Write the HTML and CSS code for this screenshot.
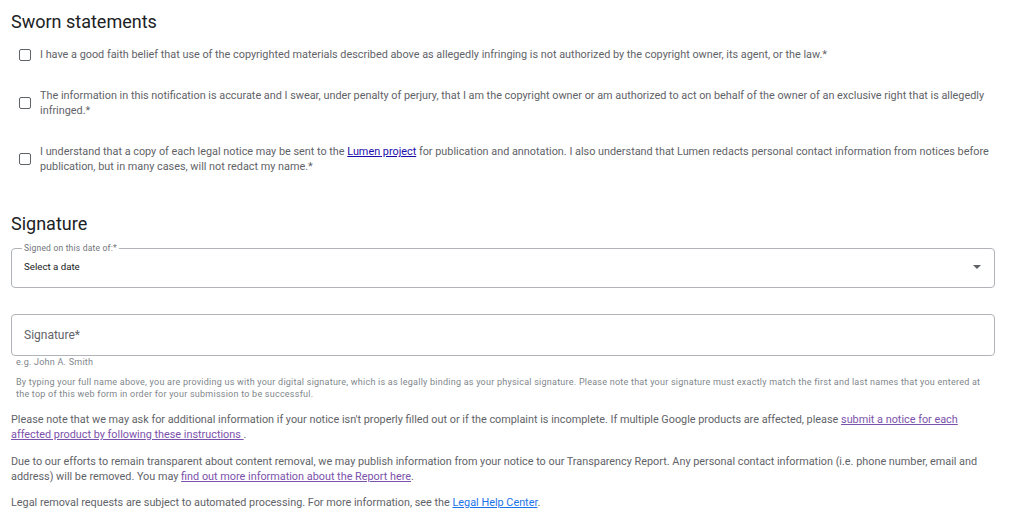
FILE: index.html
```html
<!DOCTYPE html>
<html lang="en">
<head>
<meta charset="utf-8">
<title>Sworn statements</title>
<link rel="stylesheet" href="styles.css">
</head>
<body>
<main class="page">
  <h2 class="heading">Sworn statements</h2>
  <div class="checks">
    <label class="check">
      <span class="box"></span>
      <span class="check-text">I have a good faith belief that use of the copyrighted materials described above as allegedly infringing is not authorized by the copyright owner, its agent, or the law.*</span>
    </label>
    <label class="check">
      <span class="box"></span>
      <span class="check-text">The information in this notification is accurate and I swear, under penalty of perjury, that I am the copyright owner or am authorized to act on behalf of the owner of an exclusive right that is allegedly infringed.*</span>
    </label>
    <label class="check">
      <span class="box"></span>
      <span class="check-text">I understand that a copy of each legal notice may be sent to the <a class="link-lumen" href="#">Lumen project</a> for publication and annotation. I also understand that Lumen redacts personal contact information from notices before publication, but in many cases, will not redact my name.*</span>
    </label>
  </div>

  <h2 class="heading heading-sig">Signature</h2>

  <fieldset class="date-field">
    <legend class="date-label">Signed on this date of:*</legend>
    <div class="date-row">
      <span class="date-value">Select a date</span>
      <span class="caret"></span>
    </div>
  </fieldset>

  <div class="sig-field">
    <span class="sig-placeholder">Signature*</span>
  </div>
  <div class="hint">e.g. John A. Smith</div>
  <p class="fine">By typing your full name above, you are providing us with your digital signature, which is as legally binding as your physical signature. Please note that your signature must exactly match the first and last names that you entered at the top of this web form in order for your submission to be successful.</p>

  <p class="para">Please note that we may ask for additional information if your notice isn't properly filled out or if the complaint is incomplete. If multiple Google products are affected, please <a class="link-visited" href="#">submit a notice for each affected product by following these instructions </a>.</p>
  <p class="para">Due to our efforts to remain transparent about content removal, we may publish information from your notice to our Transparency Report. Any personal contact information (i.e. phone number, email and address) will be removed. You may <a class="link-visited" href="#">find out more information about the Report here</a>.</p>
  <p class="para">Legal removal requests are subject to automated processing. For more information, see the <a class="link-blue" href="#">Legal Help Center</a>.</p>
</main>
</body>
</html>
```
FILE: styles.css
```css
html, body {
  margin: 0;
  padding: 0;
  background: #ffffff;
}
body {
  font-family: Roboto, "Liberation Sans", Arial, sans-serif;
  color: #5f6368;
}
.page {
  width: 984px;
  margin-left: 11px;
  padding-top: 10px;
}
.heading {
  margin: 0;
  font-size: 18px;
  font-weight: 400;
  line-height: 24px;
  color: #202124;
}
.checks {
  display: flex;
  flex-direction: column;
  gap: 26px;
  margin-top: 13px;
  padding-left: 8px;
}
.check {
  display: flex;
  align-items: center;
  gap: 9px;
}
.box {
  flex: none;
  width: 10px;
  height: 10px;
  border: 1.5px solid #5f6368;
  border-radius: 2px;
}
.check-text {
  font-size: 10.85px;
  line-height: 15px;
  color: #5f6368;
}
.link-lumen {
  color: #1a0dab;
  text-decoration: underline;
}
.heading-sig {
  margin-top: 38px;
}
.date-field {
  margin: 8px 0 0;
  padding: 0 12px 10px 12px;
  border: 1px solid #b0b4b8;
  border-radius: 4px;
  min-inline-size: 0;
}
.date-label {
  padding: 0 2px;
  margin-left: -2px;
  font-size: 8.5px;
  letter-spacing: 0.2px;
  line-height: 9px;
  color: #70757a;
}
.date-row {
  display: flex;
  align-items: center;
  justify-content: space-between;
  padding-top: 7px;
  padding-bottom: 4px;
}
.date-value {
  font-size: 9.7px;
  line-height: 13px;
  color: #202124;
}
.caret {
  width: 0;
  height: 0;
  border-left: 4px solid transparent;
  border-right: 4px solid transparent;
  border-top: 4px solid #5f6368;
  margin-right: 1px;
}
.sig-field {
  margin-top: 26px;
  height: 40px;
  border: 1px solid #b0b4b8;
  border-radius: 4px;
  display: flex;
  align-items: center;
  padding-left: 12px;
}
.sig-placeholder {
  font-size: 12px;
  color: #5f6368;
}
.hint {
  margin-top: 1px;
  padding-left: 5px;
  font-size: 9px;
  letter-spacing: 0.24px;
  line-height: 10px;
  color: #80868b;
}
.fine {
  margin: 9px 0 0;
  padding-left: 5px;
  font-size: 9px;
  letter-spacing: 0.24px;
  line-height: 12px;
  color: #80868b;
}
.para {
  margin: 12px 0 0;
  font-size: 10.85px;
  line-height: 15px;
  color: #5f6368;
}
.para + .para {
  margin-top: 12px;
}
.para:last-child {
  margin-top: 11px;
}
.link-visited {
  color: #7b52ab;
  text-decoration: underline;
}
.link-blue {
  color: #1a73e8;
  text-decoration: underline;
}
```
